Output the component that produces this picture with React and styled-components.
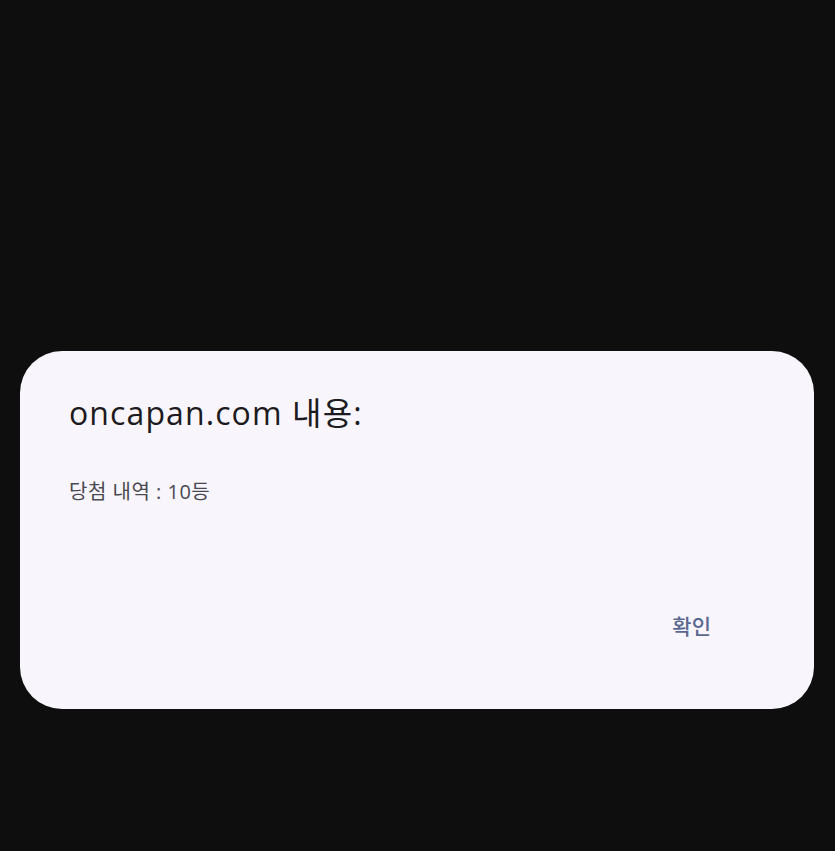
import styled, { createGlobalStyle } from 'styled-components';

const FONT = '"Open Sans", "Noto Sans CJK KR", sans-serif';

const GlobalStyle = createGlobalStyle`
  html, body {
    margin: 0;
    padding: 0;
    background: #0e0e0e;
  }
  body {
    font-family: ${FONT};
  }
`;

const Screen = styled.div`
  min-height: 851px;
  box-sizing: border-box;
  padding: 351px 21px 0 20px;
  background: #0e0e0e;
`;

const Dialog = styled.div`
  display: flex;
  flex-direction: column;
  box-sizing: border-box;
  padding: 42px 103px 58px 49px;
  background: #f8f6fc;
  border-radius: 42px;
`;

const Title = styled.h2`
  margin: 0;
  font-size: 32px;
  line-height: 40px;
  letter-spacing: 1.1px;
  font-weight: 400;
  color: #1d1b20;
  font-family: ${FONT};
`;

const Message = styled.p`
  margin: 45px 0 0;
  font-size: 20px;
  line-height: 28px;
  letter-spacing: 0.5px;
  color: #4a4850;
  font-family: ${FONT};
`;

const Actions = styled.div`
  display: flex;
  justify-content: flex-end;
  margin-top: 96px;
`;

const TextButton = styled.button`
  padding: 12px 0 12px 24px;
  border: 0;
  background: transparent;
  color: #5a6790;
  font-size: 21px;
  line-height: 25px;
  font-weight: 500;
  font-family: ${FONT};
  cursor: pointer;
`;

export default function App() {
  return (
    <>
      <GlobalStyle />
      <Screen>
        <Dialog role="alertdialog">
          <Title>oncapan.com 내용:</Title>
          <Message>당첨 내역 : 10등</Message>
          <Actions>
            <TextButton>확인</TextButton>
          </Actions>
        </Dialog>
      </Screen>
    </>
  );
}
